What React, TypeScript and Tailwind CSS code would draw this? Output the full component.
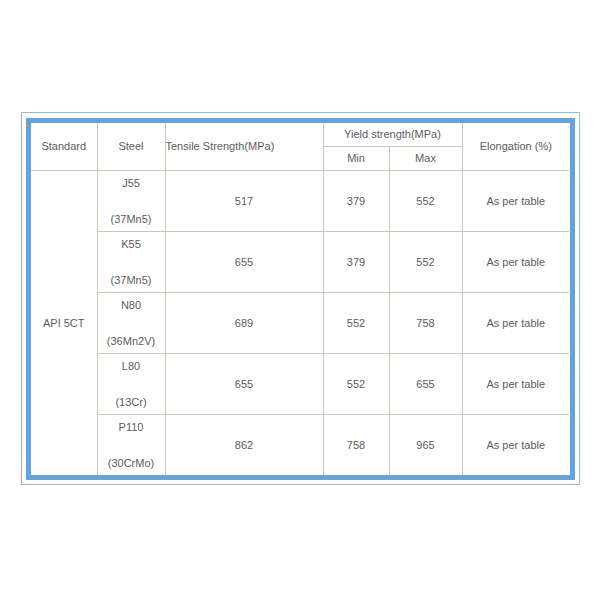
const rows = [
  { grade: "J55", mat: "(37Mn5)", tensile: "517", min: "379", max: "552" },
  { grade: "K55", mat: "(37Mn5)", tensile: "655", min: "379", max: "552" },
  { grade: "N80", mat: "(36Mn2V)", tensile: "689", min: "552", max: "758" },
  { grade: "L80", mat: "(13Cr)", tensile: "655", min: "552", max: "655" },
  { grade: "P110", mat: "(30CrMo)", tensile: "862", min: "758", max: "965" },
];

const cell = "border border-[#cbc7bb] text-center align-middle p-0";

export default function App() {
  return (
    <div className="min-h-[600px] bg-white pt-[112px] pl-[21px] font-['Liberation_Sans',Arial,sans-serif] text-[11px] text-[#5c5c5c]">
      <div className="w-[559px] border border-[#8fbce6] border-l-[#9fb0c2] border-b-[#9fb0c2] px-[4px] pt-[5px] pb-[4px]">
        <div className="border-[5px] border-[#64a3dd] bg-white">
          <table className="w-[538px] table-fixed border-collapse border-hidden leading-[18px]">
            <colgroup>
              <col className="w-[66px]" />
              <col className="w-[68px]" />
              <col className="w-[158px]" />
              <col className="w-[66px]" />
              <col className="w-[73px]" />
              <col className="w-[107px]" />
            </colgroup>
            <thead>
              <tr className="h-[23px]">
                <td rowSpan={2} className={cell}>Standard</td>
                <td rowSpan={2} className={cell}>Steel</td>
                <td rowSpan={2} className={`${cell} !text-left`}>Tensile Strength(MPa)</td>
                <td colSpan={2} className={cell}>Yield strength(MPa)</td>
                <td rowSpan={2} className={cell}>Elongation (%)</td>
              </tr>
              <tr className="h-[24px]">
                <td className={cell}>Min</td>
                <td className={cell}>Max</td>
              </tr>
            </thead>
            <tbody>
              {rows.map((r, i) => (
                <tr key={r.grade} className="h-[61px]">
                  {i === 0 && (
                    <td rowSpan={5} className={cell}>API 5CT</td>
                  )}
                  <td className={cell}>
                    {r.grade}
                    <br />
                    <br />
                    {r.mat}
                  </td>
                  <td className={cell}>{r.tensile}</td>
                  <td className={cell}>{r.min}</td>
                  <td className={cell}>{r.max}</td>
                  <td className={cell}>As per table</td>
                </tr>
              ))}
            </tbody>
          </table>
        </div>
      </div>
    </div>
  );
}
